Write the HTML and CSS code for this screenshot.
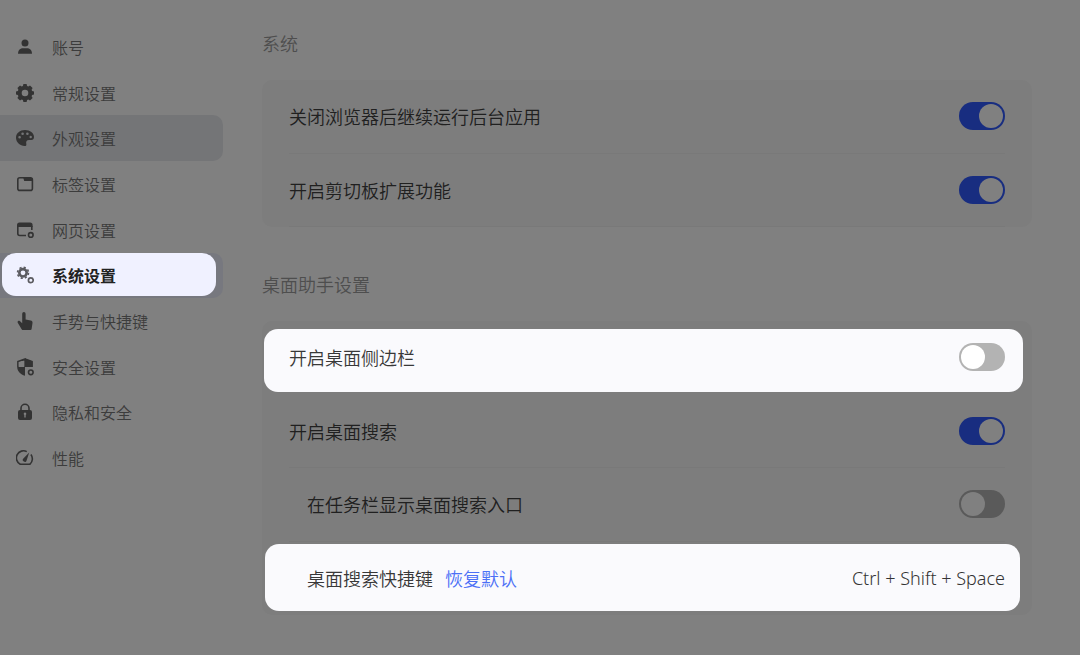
FILE: index.html
```
<!DOCTYPE html>
<html lang="zh-CN">
<head>
<meta charset="utf-8">
<meta name="viewport" content="width=device-width, initial-scale=1.0"/>
<title>系统设置</title>
<link rel="stylesheet" href="styles.css">
</head>
<body>
<div class="page">

<nav class="sidebar">
  <a class="item" href="#account">
    <svg class="icon" viewBox="0 0 18 18"><circle cx="9" cy="5" r="3.5"/><path d="M2 15.800c0-4 2.500-5.600 5-5.600h4c2.500 0 5 1.600 5 5.600z"/></svg>
    账号</a>
  <a class="item" href="#general">
    <svg class="icon" viewBox="0 0 18 18"><path fill-rule="evenodd" d="M7.400 0h3.200l.5 1.900 1.200.5 1.700-1 2.600 2.600-1 1.700.5 1.200 1.900.5v3.200l-1.900.5-.5 1.200 1 1.700-2.600 2.600-1.700-1-1.200.5-.5 1.900H7.400l-.5-1.900-1.200-.5-1.700 1L1.400 14l1-1.700-.5-1.200L0 10.600V7.400l1.900-.5.5-1.200-1-1.700L4 1.400l1.700 1 1.200-.5zM9 5.700a3.300 3.300 0 1 0 0 6.600 3.300 3.300 0 0 0 0-6.600z"/></svg>
    常规设置</a>
  <a class="item hover" href="#look">
    <svg class="icon" viewBox="0 0 18 18"><path fill-rule="evenodd" d="M9 1C4 1 0 4.200 0 8.700c0 4.400 4 8.300 8.600 8.300 1.600 0 2-.9 1.700-2.100-.5-2.300.4-3.900 2.700-3.900h2.300c1.700 0 2.700-1 2.700-2.900C18 4 14 1 9 1zM3.600 7a1.300 1.300 0 1 1 0 2.600 1.300 1.300 0 0 1 0-2.600zm3-3.600a1.300 1.300 0 1 1 0 2.600 1.300 1.300 0 0 1 0-2.600zm4.800 0a1.300 1.300 0 1 1 0 2.600 1.300 1.300 0 0 1 0-2.600zm3.300 3.400a1.200 1.200 0 1 1 0 2.400 1.200 1.200 0 0 1 0-2.400z"/></svg>
    外观设置</a>
  <a class="item" href="#tabs">
    <svg class="icon" viewBox="0 0 18 18"><rect class="line" x="1.800" y="2.800" width="14.600" height="12.600" rx="2"/><path d="M7 2h7.500l2 2v2H8.200z"/></svg>
    标签设置</a>
  <a class="item" href="#web">
    <svg class="icon" viewBox="0 0 18 18"><path d="M1 6V4a2.500 2.500 0 0 1 2.500-2.500h10.600A2.500 2.500 0 0 1 16.600 4v2z"/><path class="line" d="M1.800 5v7.500a2 2 0 0 0 2 2H10M15.800 5v4"/><circle class="line" cx="14.800" cy="13.900" r="2.300"/></svg>
    网页设置</a>
  <a class="item current" href="#system">
    <svg class="icon" viewBox="0 0 18 18"><circle cx="7" cy="6.800" r="3.700" fill="none" stroke-width="2.600"/><circle cx="7" cy="6.800" r="5.500" fill="none" stroke-width="1.600" stroke-dasharray="2.160 2.160"/><circle cx="14.800" cy="14.200" r="2.400" fill="none" stroke-width="1.700"/></svg>
    系统设置</a>
  <a class="item" href="#gesture">
    <svg class="icon" viewBox="0 0 18 18"><path d="M6.200 1.800a1.700 1.700 0 0 1 3.400 0v5.700l5.100 1.100c1.300.3 2 1.100 1.800 2.400L15.600 17c-.1.700-.5 1-1.100 1H7c-.5 0-.9-.2-1.200-.6L1.900 11c-.5-.8-.3-1.600.2-2 .5-.4 1.200-.3 1.700.1L6.200 11.300z"/></svg>
    手势与快捷键</a>
  <a class="item" href="#safe">
    <svg class="icon" viewBox="0 0 18 18"><path class="line" d="M9 1l7 2.600V9M1.900 9V3.600L9 1v8"/><path d="M9 .8l7.500 2.800V9H9zM1.200 9H9v8.800C4.600 16.600 1.200 13 1.200 9z"/><path class="gap" d="M2.800 4.400l5.400-2V8.600H2.800z"/><circle class="line" cx="14.800" cy="14.300" r="2.300"/></svg>
    安全设置</a>
  <a class="item" href="#privacy">
    <svg class="icon" viewBox="0 0 18 18"><path class="line" d="M5 8V5.300a4 4 0 0 1 8 0V8"/><path fill-rule="evenodd" d="M4 7h10a2 2 0 0 1 2 2v6a2 2 0 0 1-2 2H4a2 2 0 0 1-2-2V9a2 2 0 0 1 2-2zm5 2.500a1.300 1.300 0 0 0-.7 2.400V14.500h1.400V11.900A1.300 1.300 0 0 0 9 9.500z"/></svg>
    隐私和安全</a>
  <a class="item" href="#speed">
    <svg class="icon" viewBox="0 0 18 18"><path class="line" d="M10.800 2.600A7.100 7.100 0 0 0 4.200 15.200h9.800a7.200 7.200 0 0 0 .9-9.700"/><path d="M13.200 3.400l-2.600 8a1.900 1.900 0 1 1-3.200-1.800z"/></svg>
    性能</a>
</nav>

<main class="content">
  <section>
    <h2 class="title">系统</h2>
    <div class="card">
      <div class="row">
        <label for="background">关闭浏览器后继续运行后台应用</label>
        <input class="switch" type="checkbox" id="background" checked>
      </div>
      <div class="row">
        <label for="clipboard">开启剪切板扩展功能</label>
        <input class="switch" type="checkbox" id="clipboard" checked>
      </div>
    </div>
  </section>

  <section>
    <h2 class="title">桌面助手设置</h2>
    <div class="card card-tall">
      <div class="row lit">
        <label for="side">开启桌面侧边栏</label>
        <input class="switch" type="checkbox" id="side">
      </div>
      <div class="row">
        <label for="search">开启桌面搜索</label>
        <input class="switch" type="checkbox" id="search" checked>
      </div>
      <div class="row sub">
        <label for="taskbar">在任务栏显示桌面搜索入口</label>
        <input class="switch" type="checkbox" id="taskbar">
      </div>
      <div class="row sub lit lit-keys">
        <label for="keys">桌面搜索快捷键</label>
        <a class="reset" href="#reset">恢复默认</a>
        <input class="keys" type="text" id="keys" value="Ctrl + Shift + Space" readonly>
      </div>
    </div>
  </section>
</main>

</div>
</body>
</html>
```
FILE: styles.css
```
* {box-sizing: border-box;}
body {
  margin: 0;
  background-color: #808080;
  color: #202020;
  font-family: "Noto Sans", "Noto Sans CJK SC", sans-serif;
  font-size: 18px;
  font-weight: 350;
}
.page {
  display: flex;
  min-height: 100vh;
}

/* left menu */
.sidebar {
  flex: none;
  width: 223px;
  height: 457px;
  margin-top: 24px;
  display: flex;
  flex-direction: column;
}
.item {
  flex: 1;
  display: flex;
  align-items: center;
  gap: 18px;
  padding-left: 16px;
  border-radius: 0 10px 10px 0;
  color: #3c3c3c;
  font-size: 16px;
  text-decoration: none;
}
.hover {background-color: #747577;}
.icon {
  width: 18px;
  height: 18px;
  fill: #333;
}
.line {
  fill: none;
  stroke: #333;
  stroke-width: 1.6;
}
.gap {fill: #808080;}

.current {
  position: relative;
  z-index: 0;
  background-color: #77787f;
  color: #222;
  font-weight: 600;
}
.current .icon {stroke: #5b5b60;}
.current::before {
  content: "";
  position: absolute;
  z-index: -1;
  inset: 0 7px 2px 2px;
  border-radius: 14px;
  background-color: #f0f1ff;
}

/* right side */
.content {
  flex: 1;
  display: flex;
  flex-direction: column;
  gap: 44px;
  padding: 30px 48px 40px 39px;
}
.title {
  margin: 0 0 22px;
  color: #4e4e4e;
  font-size: 18px;
  font-weight: 350;
  line-height: 28px;
}
.card {
  display: grid;
  grid-auto-rows: 1fr;
  min-height: 147px;
  padding: 0 27px;
  border-radius: 10px;
  background-color: #7d7d7d;
}
.card-tall {min-height: 294px;}
.row {
  position: relative;
  z-index: 0;
  display: flex;
  align-items: center;
  justify-content: space-between;
  border-bottom: 1px solid #797979;
}
.sub {padding-left: 18px;}

/* bright rows */
.lit {
  border-bottom-color: transparent;
  color: #383838;
}
.lit::before {
  content: "";
  position: absolute;
  z-index: -1;
  inset: 8px -18px 2px -25px;
  border-radius: 14px;
  background-color: #fafafd;
}
.lit-keys::before {inset: 2px -15px 3px -24px;}

.switch {
  appearance: none;
  flex: none;
  width: 46px;
  height: 28px;
  margin: 0;
  padding: 2px;
  border-radius: 14px;
  background-color: #5a5a5a;
}
.switch::before {
  content: "";
  display: block;
  width: 24px;
  height: 24px;
  border-radius: 50%;
  background-color: #808080;
}
.switch:checked {background-color: #182d80;}
.switch:checked::before {margin-left: 18px;}
.lit .switch {background-color: #b3b3b3;}
.lit .switch::before {background-color: #fff;}

.reset {
  margin-left: 12px;
  color: #4c70f6;
  text-decoration: none;
}
.keys {
  flex: 1;
  min-width: 0;
  padding: 0;
  border: none;
  background: none;
  color: #333;
  font: inherit;
  text-align: right;
}
```
